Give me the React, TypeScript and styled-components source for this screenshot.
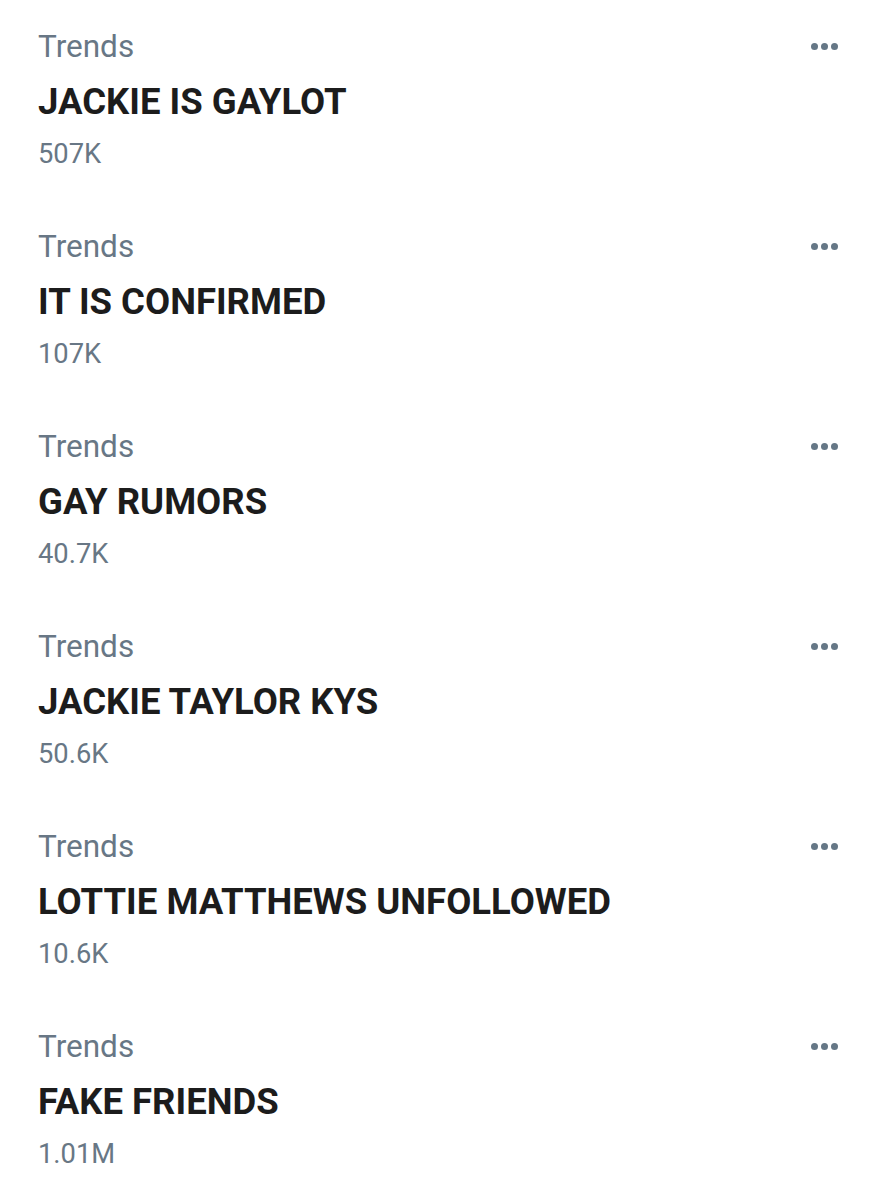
import React from 'react';
import styled, { createGlobalStyle } from 'styled-components';

const GlobalStyle = createGlobalStyle`
    body {
        margin: 0;
        background: #ffffff;
        font-family: Roboto, 'Noto Sans', Arial, sans-serif;
    }
`;

type Trend = {
    name: string;
    count: string;
};

const trends: Trend[] = [
    { name: 'JACKIE IS GAYLOT', count: '507K' },
    { name: 'IT IS CONFIRMED', count: '107K' },
    { name: 'GAY RUMORS', count: '40.7K' },
    { name: 'JACKIE TAYLOR KYS', count: '50.6K' },
    { name: 'LOTTIE MATTHEWS UNFOLLOWED', count: '10.6K' },
    { name: 'FAKE FRIENDS', count: '1.01M' },
];

const List = styled.div`
    display: flex;
    flex-direction: column;
    width: 883px;
    padding-top: 27px;
`;

const Item = styled.div`
    display: flex;
    justify-content: space-between;
    align-items: flex-start;
    height: 200px;
    padding: 0 45px 0 38px;
    box-sizing: border-box;
`;

const Body = styled.div`
    display: flex;
    flex-direction: column;
`;

const Label = styled.div`
    color: #687785;
    font-size: 31.5px;
    line-height: 40px;
`;

const Name = styled.div`
    color: #1c1c1c;
    font-size: 36.5px;
    font-weight: 700;
    line-height: 50px;
    margin-top: 10px;
`;

const Count = styled.div`
    color: #687785;
    font-size: 27.3px;
    line-height: 36px;
    margin-top: 9px;
`;

const More = styled.button`
    display: flex;
    gap: 3px;
    border: none;
    background: none;
    padding: 0;
    margin-top: 16px;
    cursor: pointer;
`;

const Dot = styled.span`
    width: 7px;
    height: 7px;
    border-radius: 50%;
    background: #657786;
`;

function App() {
    return (
        <>
            <GlobalStyle />
            <List>
                {trends.map((t) => (
                    <Item key={t.name}>
                        <Body>
                            <Label>Trends</Label>
                            <Name>{t.name}</Name>
                            <Count>{t.count}</Count>
                        </Body>
                        <More aria-label='More'>
                            <Dot />
                            <Dot />
                            <Dot />
                        </More>
                    </Item>
                ))}
            </List>
        </>
    );
}

export default App;
